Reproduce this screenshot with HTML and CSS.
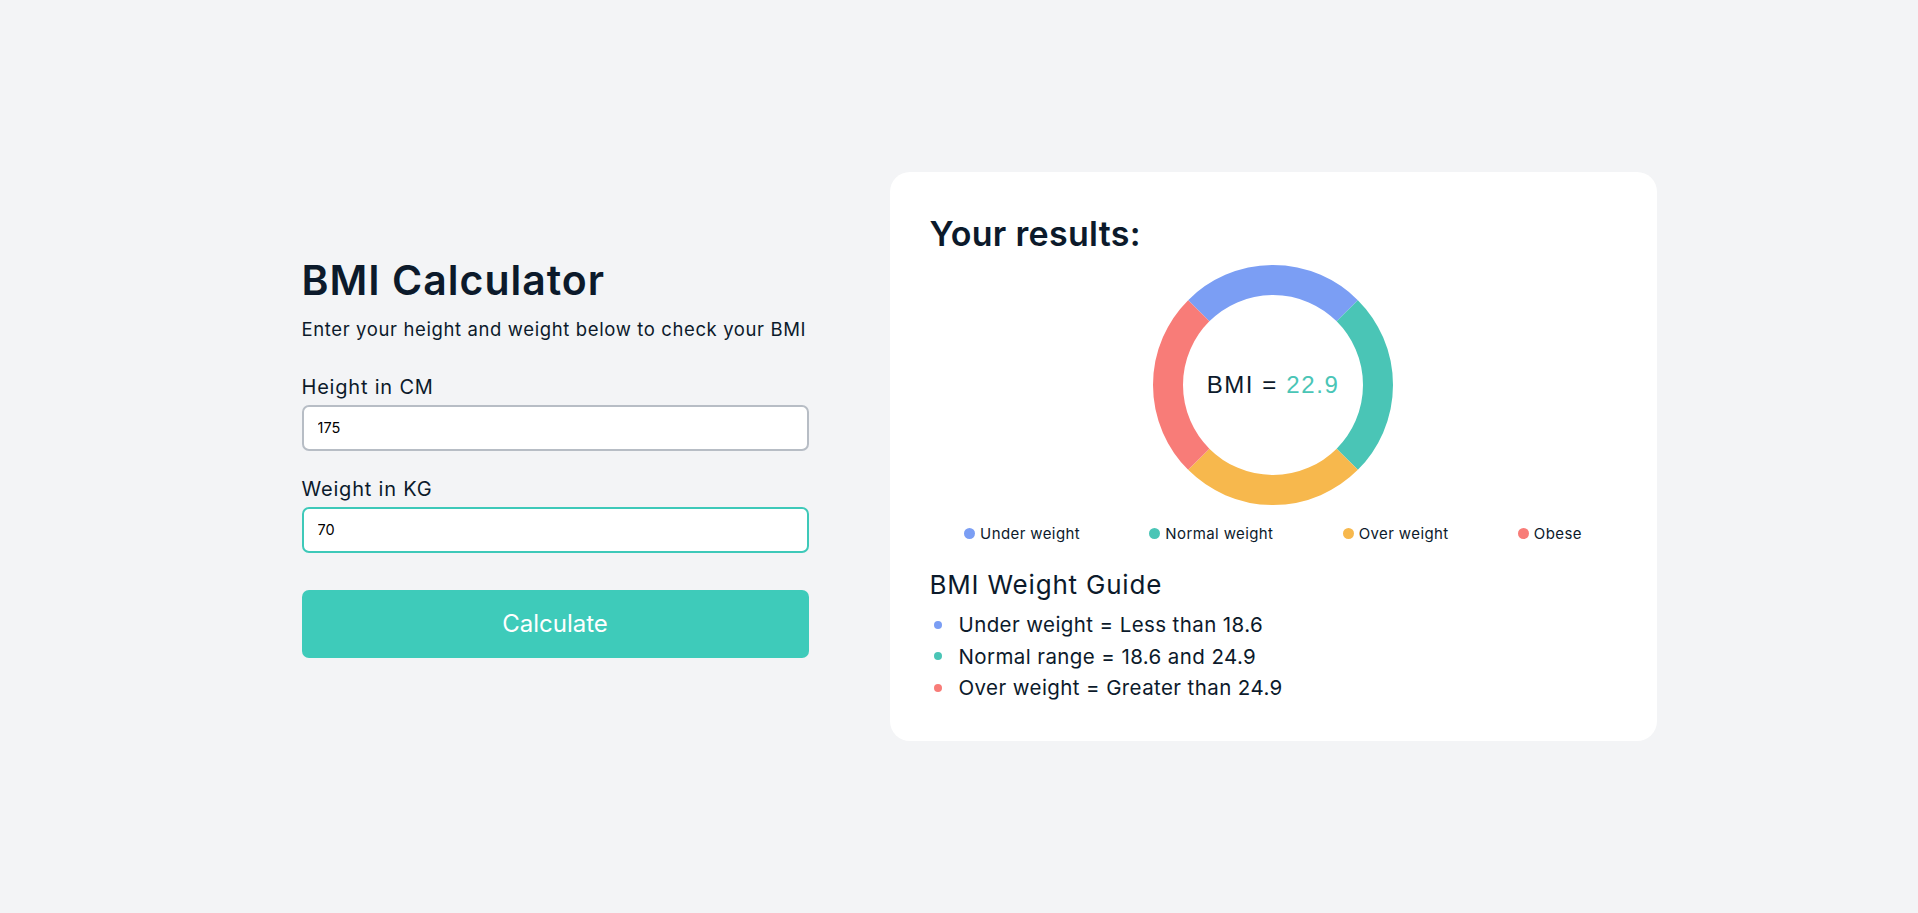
FILE: index.html
```html
<!DOCTYPE html>
<html lang="en">
<head>
<meta charset="utf-8">
<title>BMI Calculator</title>
<link rel="stylesheet" href="styles.css">
</head>
<body>
<main class="page">
  <section class="calc">
    <h1 class="calc-title">BMI Calculator</h1>
    <p class="calc-sub">Enter your height and weight below to check your BMI</p>
    <label class="field-label" for="h">Height in CM</label>
    <input class="field" id="h" type="text" value="175">
    <label class="field-label second" for="w">Weight in KG</label>
    <input class="field active" id="w" type="text" value="70">
    <button class="calc-btn" type="button">Calculate</button>
  </section>
  <section class="card">
    <h2 class="card-title">Your results:</h2>
    <div class="chart">
      <svg class="donut" width="240" height="240" viewBox="0 0 240 240">
        <path d="M45.754 45.754 A105 105 0 0 1 194.246 45.754" stroke="#7b9ef4"/>
        <path d="M194.246 45.754 A105 105 0 0 1 194.246 194.246" stroke="#4ac5b6"/>
        <path d="M194.246 194.246 A105 105 0 0 1 45.754 194.246" stroke="#f7b84d"/>
        <path d="M45.754 194.246 A105 105 0 0 1 45.754 45.754" stroke="#f87c78"/>
      </svg>
      <div class="bmi-value">BMI =&nbsp;<span class="num">22.9</span></div>
    </div>
    <ul class="legend">
      <li><span class="ldot blue"></span>Under weight</li>
      <li><span class="ldot green"></span>Normal weight</li>
      <li><span class="ldot yellow"></span>Over weight</li>
      <li><span class="ldot red"></span>Obese</li>
    </ul>
    <h3 class="guide-title">BMI Weight Guide</h3>
    <ul class="guide">
      <li><span class="gdot blue"></span>Under weight = Less than 18.6</li>
      <li><span class="gdot green"></span>Normal range = 18.6 and 24.9</li>
      <li><span class="gdot red"></span>Over weight = Greater than 24.9</li>
    </ul>
  </section>
</main>
</body>
</html>
```
FILE: styles.css
```css
* { box-sizing: border-box; }
html, body { margin: 0; padding: 0; }
body {
  background: #f3f4f6;
  font-family: "Inter", "Liberation Sans", sans-serif;
  color: #0c1a2b;
}
.page {
  min-height: 100vh;
  display: flex;
  align-items: center;
  justify-content: center;
  gap: 41px;
}
.calc {
  width: 587px;
  padding: 0 40px;
  display: flex;
  flex-direction: column;
}
.calc-title {
  margin: 0;
  font-size: 41px;
  line-height: 48px;
  font-weight: 600;
  letter-spacing: 1px;
}
.calc-sub {
  margin: 11px 0 0;
  font-size: 18.5px;
  line-height: 28px;
  font-weight: 400;
  letter-spacing: 0.62px;
  white-space: nowrap;
}
.field-label {
  margin-top: 30px;
  font-size: 20px;
  line-height: 28px;
  letter-spacing: 0.8px;
}
.field-label.second { margin-top: 24px; }
.field {
  margin-top: 4px;
  height: 46px;
  width: 100%;
  border: 2px solid #b7bdc5;
  border-radius: 7px;
  background: #fff;
  padding: 0 14px;
  font-family: "Inter", "Liberation Sans", sans-serif;
  font-size: 14.5px;
  color: #000;
  outline: none;
}
.field.active { border-color: #3ec9b9; }
.calc-btn {
  margin-top: 37px;
  height: 68px;
  width: 100%;
  border: none;
  border-radius: 7px;
  background: #3ecbba;
  color: #fff;
  font-family: "Inter", "Liberation Sans", sans-serif;
  font-size: 24px;
  font-weight: 400;
}
.card {
  width: 767px;
  background: #fff;
  border-radius: 20px;
  padding: 41px 40px 37px;
}
.card-title {
  margin: 0;
  font-size: 34px;
  line-height: 41px;
  font-weight: 600;
  letter-spacing: 0.3px;
}
.chart {
  position: relative;
  width: 240px;
  height: 240px;
  margin: 11px auto 0;
}
.donut { display: block; }
.donut path { fill: none; stroke-width: 30; }
.bmi-value {
  position: absolute;
  inset: 0;
  display: flex;
  align-items: center;
  justify-content: center;
  font-family: "Liberation Sans", Arial, sans-serif;
  font-size: 24px;
  letter-spacing: 1.6px;
  color: #0c1a2b;
}
.bmi-value .num { color: #4ac5b6; }
.legend {
  list-style: none;
  margin: 19px 0 0;
  padding: 0;
  display: flex;
  justify-content: space-around;
  font-size: 15px;
  line-height: 20px;
  letter-spacing: 0.4px;
}
.legend li { display: flex; align-items: center; }
.ldot {
  width: 11px;
  height: 11px;
  border-radius: 50%;
  margin-right: 5px;
}
.blue { background: #7b9ef4; }
.green { background: #4ac5b6; }
.yellow { background: #f7b84d; }
.red { background: #f87c78; }
.guide-title {
  margin: 26px 0 0;
  font-size: 26px;
  line-height: 30px;
  font-weight: 400;
  letter-spacing: 0.8px;
}
.guide {
  list-style: none;
  margin: 9px 0 0;
  padding: 0;
  font-size: 20.5px;
  line-height: 31.7px;
  letter-spacing: 0.4px;
}
.guide li { display: flex; align-items: center; }
.gdot {
  width: 8px;
  height: 8px;
  border-radius: 50%;
  margin: 0 17px 0 4px;
}
```
